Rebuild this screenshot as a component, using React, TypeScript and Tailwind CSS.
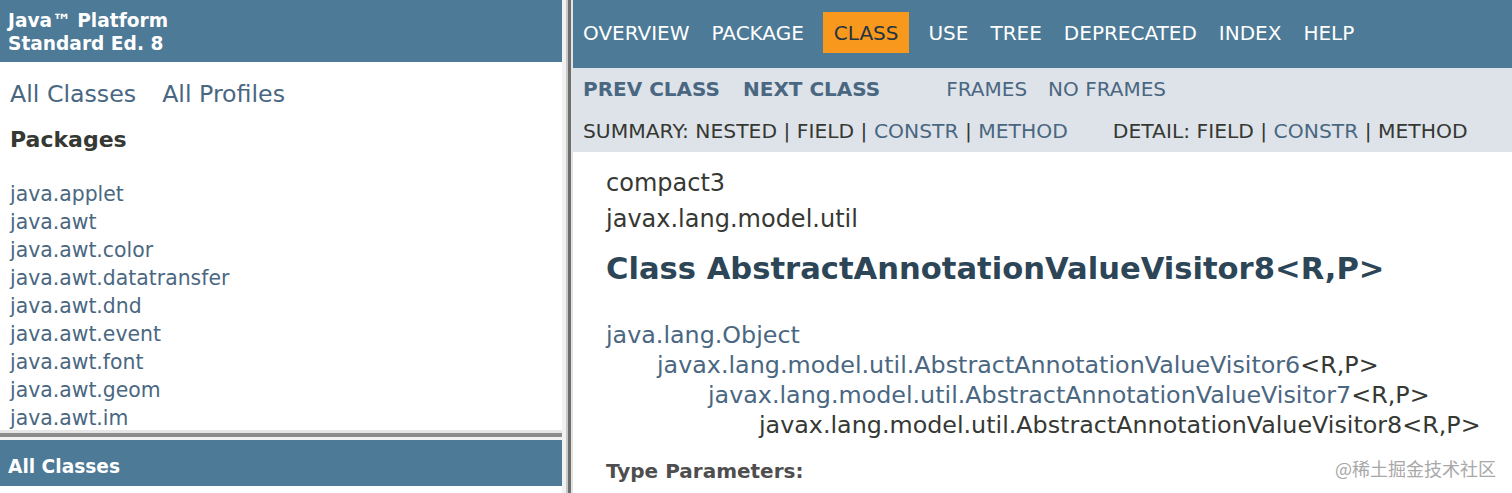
const packages = [
  "java.applet",
  "java.awt",
  "java.awt.color",
  "java.awt.datatransfer",
  "java.awt.dnd",
  "java.awt.event",
  "java.awt.font",
  "java.awt.geom",
  "java.awt.im",
  "java.awt.im.spi",
];

const navItems = ["OVERVIEW", "PACKAGE", "CLASS", "USE", "TREE", "DEPRECATED", "INDEX", "HELP"];

export default function App() {
  return (
    <div className="relative flex h-[493px] w-[1512px] overflow-hidden bg-white font-['DejaVu_Sans',sans-serif] text-[#353833]">
      {/* Left frames */}
      <div className="flex w-[562px] shrink-0 flex-col">
        {/* Packages frame */}
        <div className="h-[430px] shrink-0 overflow-hidden">
          <div className="h-[62px] bg-[#4d7a97] px-[8px] pt-[9px] text-[18.6px] font-bold leading-[23px] text-white">
            <div>Java™ Platform</div>
            <div>Standard Ed. 8</div>
          </div>
          <div className="flex gap-[26px] px-[10px] pt-[17px] text-[23.7px] leading-[30px] text-[#4a6782]">
            <span>All Classes</span>
            <span>All Profiles</span>
          </div>
          <h2 className="mt-[17px] px-[10px] text-[22px] font-bold leading-[28px] text-[#353833]">Packages</h2>
          <ul className="mt-[26px] px-[10px] text-[20.4px] leading-[28px] text-[#4a6782]">
            {packages.map((p) => (
              <li key={p}>{p}</li>
            ))}
          </ul>
        </div>
        {/* frame border */}
        <div className="flex h-[10px] shrink-0 flex-col">
          <div className="h-[3px] bg-[#e6e6e6]" />
          <div className="h-[4px] bg-[#8c8c8c]" />
          <div className="h-[3px] bg-[#f2f2f2]" />
        </div>
        {/* All Classes frame */}
        <div className="flex-1">
          <div className="flex h-[46px] items-center bg-[#4d7a97] px-[8px] pt-[7px] text-[18.6px] font-bold text-white">
            All Classes
          </div>
        </div>
      </div>

      {/* vertical frame border */}
      <div className="flex w-[11px] shrink-0">
        <div className="w-[4px] bg-[#f2f2f2]" />
        <div className="w-[2px] bg-[#c8c8c8]" />
        <div className="w-[3px] bg-[#6e6e6e]" />
        <div className="w-[2px] bg-[#e4e4e4]" />
      </div>

      {/* Right frame */}
      <div className="flex-1">
        <div className="h-[68px] bg-[#4d7a97]">
          <ul className="-ml-[1px] flex pt-[12px] text-[20px] text-white">
            {navItems.map((item) => (
              <li
                key={item}
                className={
                  item === "CLASS"
                    ? "mx-[8px] flex h-[41px] items-center bg-[#f8981d] px-[11px] text-[#253441]"
                    : "flex h-[41px] items-center px-[11px]"
                }
              >
                {item}
              </li>
            ))}
          </ul>
        </div>
        <div className="h-[84px] bg-[#dee3e9] pl-[10px] pt-[7px] text-[20.3px] leading-[28px]">
          <div className="flex text-[20px] text-[#4a6782]">
            <span className="font-bold">PREV CLASS</span>
            <span className="ml-[23px] font-bold">NEXT CLASS</span>
            <span className="ml-[66px]">FRAMES</span>
            <span className="ml-[21px]">NO FRAMES</span>
          </div>
          <div className="mt-[14px] flex whitespace-pre">
            <span>
              SUMMARY: NESTED | FIELD | <span className="text-[#4a6782]">CONSTR</span> |{" "}
              <span className="text-[#4a6782]">METHOD</span>
            </span>
            <span className="ml-[45px]">
              DETAIL: FIELD | <span className="text-[#4a6782]">CONSTR</span> | METHOD
            </span>
          </div>
        </div>
        <div className="pl-[33px]">
          <div className="pt-[16px] text-[24px] leading-[30px]">compact3</div>
          <div className="mt-[6px] text-[24px] leading-[30px]">javax.lang.model.util</div>
          <h1 className="mt-[17px] text-[30.6px] font-bold leading-[36px] text-[#2c4557]">
            Class AbstractAnnotationValueVisitor8&lt;R,P&gt;
          </h1>
          <div className="mt-[33px] text-[23.8px] leading-[30px]">
            <div className="text-[#4a6782]">java.lang.Object</div>
            <div className="pl-[51px]">
              <span className="text-[#4a6782]">javax.lang.model.util.AbstractAnnotationValueVisitor6</span>&lt;R,P&gt;
            </div>
            <div className="pl-[102px]">
              <span className="text-[#4a6782]">javax.lang.model.util.AbstractAnnotationValueVisitor7</span>&lt;R,P&gt;
            </div>
            <div className="pl-[153px]">javax.lang.model.util.AbstractAnnotationValueVisitor8&lt;R,P&gt;</div>
          </div>
          <div className="mt-[19px] text-[20px] font-bold leading-[24px] text-[#4e4e4e]">Type Parameters:</div>
        </div>
      </div>

      {/* watermark */}
      <div className="absolute right-[16px] top-[455px] font-['Noto_Sans_CJK_SC',sans-serif] text-[18px] leading-[26px] text-[#a8a8a8]">
        @稀土掘金技术社区
      </div>
    </div>
  );
}
